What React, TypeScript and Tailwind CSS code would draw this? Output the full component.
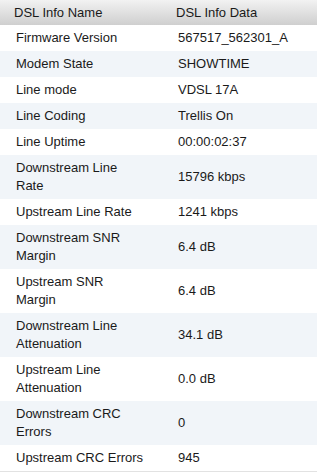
const rows: [string, string][] = [
  ["Firmware Version", "567517_562301_A"],
  ["Modem State", "SHOWTIME"],
  ["Line mode", "VDSL 17A"],
  ["Line Coding", "Trellis On"],
  ["Line Uptime", "00:00:02:37"],
  ["Downstream Line Rate", "15796 kbps"],
  ["Upstream Line Rate", "1241 kbps"],
  ["Downstream SNR Margin", "6.4 dB"],
  ["Upstream SNR Margin", "6.4 dB"],
  ["Downstream Line Attenuation", "34.1 dB"],
  ["Upstream Line Attenuation", "0.0 dB"],
  ["Downstream CRC Errors", "0"],
  ["Upstream CRC Errors", "945"],
];

export default function App() {
  return (
    <div className="w-[317px] bg-white text-[13px] leading-[18px] text-[#1a1a1a]" style={{ fontFamily: '"Liberation Sans", Arial, sans-serif' }}>
      <div className="grid grid-cols-[176px_1fr] h-[25px] items-center bg-gradient-to-b from-[#f2f2f2] to-[#cfcfcf]">
        <div className="pl-[14px]">DSL Info Name</div>
        <div>DSL Info Data</div>
      </div>
      {rows.map(([name, value], i) => (
        <div
          key={name}
          className={`grid grid-cols-[178px_1fr] items-center py-[4px] ${i % 2 === 1 ? "bg-[#f1f5f9]" : "bg-white"}`}
        >
          <div className="pl-[16px] pr-[34px]">{name}</div>
          <div>{value}</div>
        </div>
      ))}
      <div className="h-px bg-[#e2e2e2]" />
    </div>
  );
}
